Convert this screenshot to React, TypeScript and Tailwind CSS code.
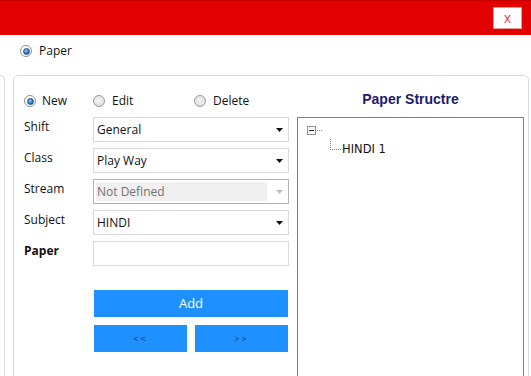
import React from "react";

function Radio({ checked }: { checked?: boolean }) {
  return checked ? (
    <span className="w-[12px] h-[12px] rounded-full border border-[#8e8f8f] bg-white flex items-center justify-center shrink-0">
      <span className="w-[7px] h-[7px] rounded-full bg-[radial-gradient(circle_at_40%_35%,#8fd0ff,#1b63b0_70%)] border border-[#16508f]" />
    </span>
  ) : (
    <span className="w-[12px] h-[12px] rounded-full border border-[#9a9a9a] bg-[radial-gradient(circle_at_45%_40%,#f4f4f4,#d8d8d8)] shrink-0" />
  );
}

function Arrow({ disabled }: { disabled?: boolean }) {
  return (
    <svg width="7" height="4" viewBox="0 0 7 4" className="shrink-0">
      <polygon points="0,0 7,0 3.5,4" fill={disabled ? "#bdbdbd" : "#111"} />
    </svg>
  );
}

function Select({ value, disabled }: { value: string; disabled?: boolean }) {
  return (
    <div
      className={`w-[196px] h-[25px] flex items-center border pl-[2px] pr-[5px] ${
        disabled ? "border-[#b4b4b4] bg-white" : "border-[#d9d9d9] bg-white"
      }`}
    >
      <div
        className={`flex-1 h-[19px] flex items-center pl-[1px] ${
          disabled ? "bg-[#f0f0f0] text-[#707070] mr-[9px]" : "text-[#111] mr-[9px]"
        }`}
      >
        {value}
      </div>
      <Arrow disabled={disabled} />
    </div>
  );
}

function Row({ label, bold, children }: { label: string; bold?: boolean; children: React.ReactNode }) {
  return (
    <div className="flex h-[25px]">
      <div className={`w-[69px] leading-[20px] ${bold ? "font-bold" : ""}`}>{label}</div>
      {children}
    </div>
  );
}

export default function App() {
  return (
    <div className="w-[531px] h-[376px] overflow-hidden bg-white text-[12px] text-[#111] font-['Open_Sans',sans-serif] flex flex-col">
      <div className="h-[35px] shrink-0 bg-[#e20000] border-t border-[#c40000] flex justify-end items-center pr-[9px]">
        <div className="w-[29px] h-[22px] bg-white border border-[#f09a9a] flex items-center justify-center text-[#e24a4a] text-[14px] leading-none font-['Liberation_Sans',sans-serif]">
          x
        </div>
      </div>
      <div className="h-[30px] mt-[1px] shrink-0 flex items-center pl-[20px] gap-[7px]">
        <Radio checked />
        <span>Paper</span>
      </div>
      <div className="mt-[9px] flex flex-1 min-h-0">
        <div className="w-[5px] h-[400px] border-t border-r border-[#d3dde2] rounded-tr-[5px] shrink-0" />
        <div className="ml-[8px] w-[516px] h-[400px] border border-[#d3dde2] rounded-t-[5px] flex pl-[10px] pr-[3px]">
          <div className="w-[265px] flex flex-col">
            <div className="mt-[15px] h-[20px] flex items-center">
              <div className="w-[69px] flex items-center gap-[6px]">
                <Radio checked />
                <span>New</span>
              </div>
              <div className="w-[101px] flex items-center gap-[7px]">
                <Radio />
                <span>Edit</span>
              </div>
              <div className="flex items-center gap-[7px]">
                <Radio />
                <span>Delete</span>
              </div>
            </div>
            <div className="mt-[6px] flex flex-col gap-[6px]">
              <Row label="Shift">
                <Select value="General" />
              </Row>
              <Row label="Class">
                <Select value="Play Way" />
              </Row>
              <Row label="Stream">
                <Select value="Not Defined" disabled />
              </Row>
              <Row label="Subject">
                <Select value="HINDI" />
              </Row>
              <Row label="Paper" bold>
                <div className="w-[196px] h-[25px] border border-[#d9d9d9] bg-white" />
              </Row>
            </div>
            <div className="ml-[70px] w-[194px] mt-[24px] flex flex-col gap-[8px]">
              <div className="h-[27px] bg-[#1e90ff] text-white text-[13px] flex items-center justify-center">Add</div>
              <div className="flex gap-[8px]">
                <div className="flex-1 h-[27px] bg-[#1e90ff] text-[#1d3366] text-[9px] tracking-[2px] flex items-center justify-center">&lt;&lt;</div>
                <div className="flex-1 h-[27px] bg-[#1e90ff] text-[#1d3366] text-[9px] tracking-[2px] flex items-center justify-center">&gt;&gt;</div>
              </div>
            </div>
          </div>
          <div className="ml-[8px] w-[227px] flex flex-col">
            <div className="mt-[14px] h-[18px] leading-[18px] text-center font-bold text-[14px] text-[#1b1b70] font-['Liberation_Sans',sans-serif]">
              Paper Structre
            </div>
            <div className="mt-[9px] flex-1 border border-[#828282] pl-[9px] pt-[8px] font-['DejaVu_Sans',sans-serif] text-[11.5px] text-[#111]">
              <div className="flex items-center h-[9px]">
                <div className="w-[9px] h-[9px] border border-[#939393] bg-[#f4f4f4] flex items-center justify-center">
                  <div className="w-[5px] h-px bg-[#333]" />
                </div>
                <svg width="5" height="1" className="ml-[1px]">
                  <line x1="0" y1="0.5" x2="5" y2="0.5" stroke="#8a8a8a" strokeDasharray="1 1" />
                </svg>
              </div>
              <div className="flex items-start ml-[23px] mt-[4px]">
                <svg width="12" height="11" className="shrink-0">
                  <line x1="0.5" y1="0" x2="0.5" y2="11" stroke="#8a8a8a" strokeDasharray="1 1" />
                  <line x1="0" y1="10.5" x2="12" y2="10.5" stroke="#8a8a8a" strokeDasharray="1 1" />
                </svg>
                <span className="mt-[3px] leading-[14px]">HINDI 1</span>
              </div>
            </div>
          </div>
        </div>
      </div>
    </div>
  );
}
